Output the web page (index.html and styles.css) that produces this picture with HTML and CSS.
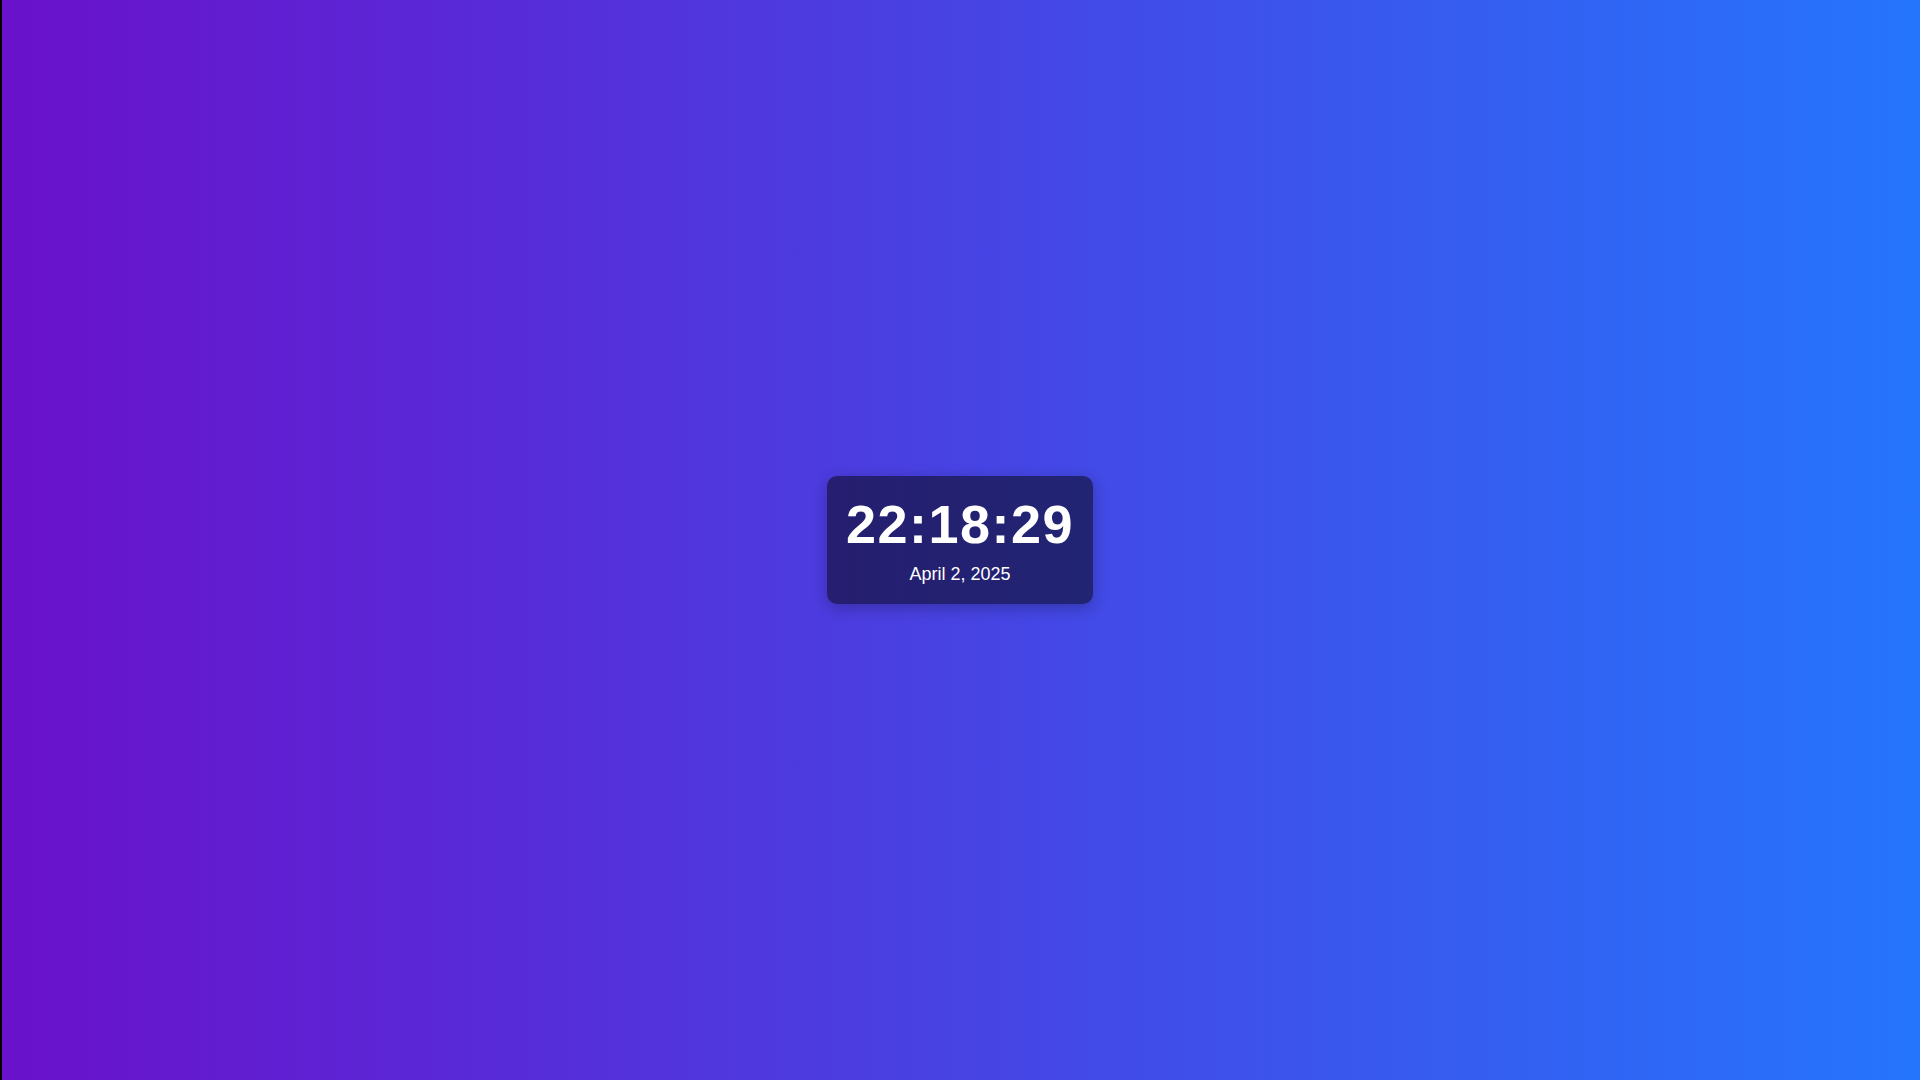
FILE: index.html
```html
<!DOCTYPE html>
<html lang="en">
<head>
<meta charset="UTF-8">
<title>Clock</title>
<link rel="stylesheet" href="styles.css">
</head>
<body>
<div class="page">
  <div class="clock">
    <div class="time">22:18:29</div>
    <div class="date">April 2, 2025</div>
  </div>
</div>
</body>
</html>
```
FILE: styles.css
```css
html, body {
  margin: 0;
  padding: 0;
  height: 100%;
}
body {
  font-family: "Liberation Sans", Arial, sans-serif;
}
.page {
  height: 100vh;
  background:
    linear-gradient(to right, #000 2px, transparent 2px),
    linear-gradient(to right, #6a11cb, #2575fc);
  display: flex;
  align-items: center;
  justify-content: center;
}
.clock {
  background: rgba(0, 0, 0, 0.5);
  border-radius: 10px;
  padding: 17px 19px 19px;
  box-shadow: 0 4px 15px rgba(0, 0, 0, 0.25);
  color: #fff;
  text-align: center;
}
.time {
  font-size: 54px;
  font-weight: bold;
  letter-spacing: 1.5px;
  line-height: 1.15;
}
.date {
  font-size: 18px;
  margin-top: 8px;
}
```
